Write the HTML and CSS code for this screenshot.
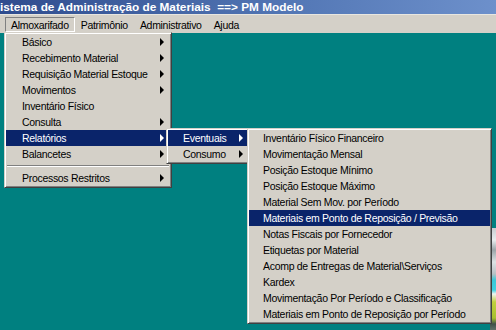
FILE: index.html
```html
<!DOCTYPE html>
<html lang="pt-BR">
<head>
    <meta charset="UTF-8">
    <title>Sistema de Administração de Materiais</title>
    <link rel="stylesheet" href="styles.css">
</head>
<body>
    <div class="titlebar">istema de Administração de Materiais&nbsp; ==&gt; PM Modelo</div>
    <div class="menubar">
        <span class="mb-item open">Almoxarifado</span>
        <span class="mb-item">Patrimônio</span>
        <span class="mb-item">Administrativo</span>
        <span class="mb-item">Ajuda</span>
    </div>
    <div class="desktop">
        <div class="picture"></div>

        <ul class="menu menu-main">
            <li class="sub">Básico</li>
            <li class="sub">Recebimento Material</li>
            <li class="sub">Requisição Material Estoque</li>
            <li class="sub">Movimentos</li>
            <li>Inventário Físico</li>
            <li class="sub">Consulta</li>
            <li class="sub active">Relatórios</li>
            <li class="sub">Balancetes</li>
            <li class="sep"></li>
            <li class="sub">Processos Restritos</li>
        </ul>

        <ul class="menu menu-rel">
            <li class="sub active">Eventuais</li>
            <li class="sub">Consumo</li>
        </ul>

        <ul class="menu menu-event">
            <li>Inventário Físico Financeiro</li>
            <li>Movimentação Mensal</li>
            <li>Posição Estoque Mínimo</li>
            <li>Posição Estoque Máximo</li>
            <li>Material Sem Mov. por Período</li>
            <li class="active">Materiais em Ponto de Reposição / Previsão</li>
            <li>Notas Fiscais por Fornecedor</li>
            <li>Etiquetas por Material</li>
            <li>Acomp de Entregas de Material\Serviços</li>
            <li>Kardex</li>
            <li>Movimentação Por Período e Classificação</li>
            <li>Materiais em Ponto de Reposição por Período</li>
        </ul>
    </div>
</body>
</html>
```

FILE: styles.css
```css
html, body {
    height: 100%;
}
body {
    margin: 0;
    font-family: 'Liberation Sans', Arial, sans-serif;
    font-size: 10.5px;
    letter-spacing: -0.3px;
    color: #000;
    background: #008080;
    display: flex;
    flex-direction: column;
    overflow: hidden;
}
.titlebar {
    height: 14px;
    line-height: 14px;
    background: linear-gradient(to right, #2f4c8e, #5478b6 60%, #6d90cb);
    color: #fff;
    font-weight: bold;
    font-size: 11.8px;
    letter-spacing: 0;
    white-space: nowrap;
}
.menubar {
    height: 19px;
    background: #d4d0c8;
    display: flex;
    align-items: flex-start;
    padding: 2px 0 0 5px;
    box-sizing: border-box;
    border-top: 1px solid #e8e6e0;
}
.mb-item {
    height: 15px;
    line-height: 15px;
    padding: 0 5px;
    border: 1px solid transparent;
    box-sizing: border-box;
    white-space: nowrap;
}
.mb-item.open {
    border-color: #808080 #fff #fff #808080;
}
.desktop {
    flex: 1;
    position: relative;
    background: #008080;
}
.picture {
    position: absolute;
    left: 490px;
    top: 195px;
    right: 0;
    bottom: 0;
    background: linear-gradient(to bottom,
        #c8ccd0 0, #e8ecee 12px, #9aa4a8 22px, #dde2e4 34px, #b8c0c4 46px,
        #3cc8d8 52px, #40d0e0 62px, #f0f4f0 66px, #c0d040 74px, #a8c030 90px,
        #405048 96px, #607068 100%);
}
.menu {
    position: absolute;
    list-style: none;
    margin: 0;
    padding: 1px;
    background: #d4d0c8;
    border: 1px solid;
    border-color: #d4d0c8 #404040 #404040 #d4d0c8;
    box-shadow: inset 1px 1px #fff, inset -1px -1px #808080;
    box-sizing: border-box;
}
.menu li {
    height: 16px;
    display: flex;
    align-items: center;
    padding: 0 6px 0 16px;
    white-space: nowrap;
}
.menu li.sub::after {
    content: "";
    margin-left: auto;
    border-left: 4px solid #000;
    border-top: 4px solid transparent;
    border-bottom: 4px solid transparent;
}
.menu li.active {
    background: #0a246a;
    color: #fff;
}
.menu li.active.sub::after {
    border-left-color: #fff;
}
.menu li.sep {
    height: 2px;
    margin: 3px 1px;
    padding: 0;
    border-top: 1px solid #808080;
    border-bottom: 1px solid #fff;
    box-sizing: border-box;
}
.menu-main {
    left: 4px;
    top: -1px;
    width: 168px;
}
.menu-rel {
    left: 166px;
    top: 95px;
    width: 84px;
}
.menu-rel li {
    padding-left: 15px;
    padding-right: 5px;
}
.menu-event {
    left: 247px;
    top: 95px;
    width: 245px;
}
.menu-event li {
    padding-left: 14px;
}
```
